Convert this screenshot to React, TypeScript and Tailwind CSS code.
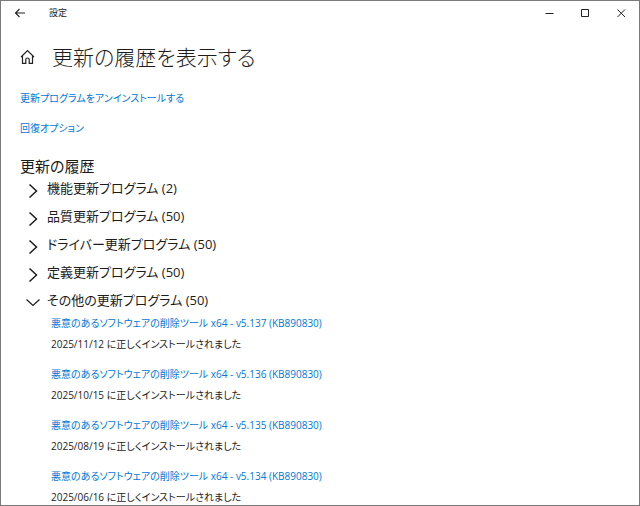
import React from "react";

const groups = [
  { label: "機能更新プログラム (2)", open: false },
  { label: "品質更新プログラム (50)", open: false },
  { label: "ドライバー更新プログラム (50)", open: false },
  { label: "定義更新プログラム (50)", open: false },
  { label: "その他の更新プログラム (50)", open: true },
];

const updates = [
  { version: "v5.137", date: "2025/11/12" },
  { version: "v5.136", date: "2025/10/15" },
  { version: "v5.135", date: "2025/08/19" },
  { version: "v5.134", date: "2025/06/16" },
];

const Chevron = ({ open }: { open: boolean }) => (
  <svg
    className="w-4 h-6 shrink-0"
    viewBox="0 0 16 24"
    fill="none"
    stroke="currentColor"
    strokeWidth={open ? 1.2 : 1.5}
  >
    <path d={open ? "M1.5 10.5L8 16.5L14.5 10.5" : "M4.5 7.5L11.5 14L4.5 20.5"} />
  </svg>
);

const TitleBar = () => (
  <header className="flex items-center h-6 pl-3">
    <button type="button" aria-label="戻る" className="w-4">
      <svg className="w-4 h-4" viewBox="0 0 16 16" fill="none" stroke="#222" strokeWidth="1.1">
        <path d="M12 8H2.5M6.5 4L2.5 8L6.5 12" />
      </svg>
    </button>
    <span className="pl-5 text-[9px]">設定</span>
    <div className="ml-auto flex">
      <button type="button" aria-label="最小化" className="w-9 flex justify-center">
        <svg className="w-4 h-4" viewBox="0 0 16 16" stroke="#222">
          <path d="M4.5 8.5H12.5" />
        </svg>
      </button>
      <button type="button" aria-label="最大化" className="w-9 flex justify-center">
        <svg className="w-4 h-4" viewBox="0 0 16 16" fill="none" stroke="#222">
          <path d="M4.5 4.5H11.5V11.5H4.5Z" />
        </svg>
      </button>
      <button type="button" aria-label="閉じる" className="w-9 flex justify-center">
        <svg className="w-4 h-4" viewBox="0 0 16 16" stroke="#222">
          <path d="M4.5 4.5L12 12M12 4.5L4.5 12" />
        </svg>
      </button>
    </div>
  </header>
);

const App = () => {
  return (
    <div className="h-screen overflow-hidden border border-[#7a7a7a] bg-white text-[#1c1c1c] font-['Open_Sans','Noto_Sans_CJK_JP',sans-serif] [font-feature-settings:'palt']">
      <TitleBar />
      <main className="px-[19px]">
        <div className="flex items-center gap-4 h-[63px]">
          <svg className="w-4 h-4" viewBox="0 0 16 16" fill="none" stroke="#222" strokeWidth="1.2">
            <path d="M1 8L7.5 1.5L14 8M2.5 7V14.4H5.8V10.5Q5.8 9 7.5 9T9.2 10.5V14.4H12.5V7" />
          </svg>
          <h1 className="text-[21px] font-light leading-8">更新の履歴を表示する</h1>
        </div>
        <nav className="flex flex-col items-start gap-[10px] text-[10px] leading-5 text-[#0078d7]">
          <a href="#uninstall">更新プログラムをアンインストールする</a>
          <a href="#recovery">回復オプション</a>
        </nav>
        <h2 className="pt-[17px] text-[15px] leading-[22px]">更新の履歴</h2>
        <ul className="flex flex-col gap-1">
          {groups.map((group) => (
            <li key={group.label}>
              <button
                type="button"
                aria-expanded={group.open}
                className="flex items-center gap-[6px] h-6 pl-[5px] text-[13px]"
              >
                <Chevron open={group.open} />
                {group.label}
              </button>
              {group.open && (
                <ul className="flex flex-col gap-[9px] pl-[31px] text-[10px] leading-[21px]">
                  {updates.map((update) => (
                    <li key={update.version}>
                      <a href={`#${update.version}`} className="block text-[#0078d7]">
                        悪意のあるソフトウェアの削除ツール x64 - {update.version} (KB890830)
                      </a>
                      <p>{update.date} に正しくインストールされました</p>
                    </li>
                  ))}
                </ul>
              )}
            </li>
          ))}
        </ul>
      </main>
    </div>
  );
};

export default App;
